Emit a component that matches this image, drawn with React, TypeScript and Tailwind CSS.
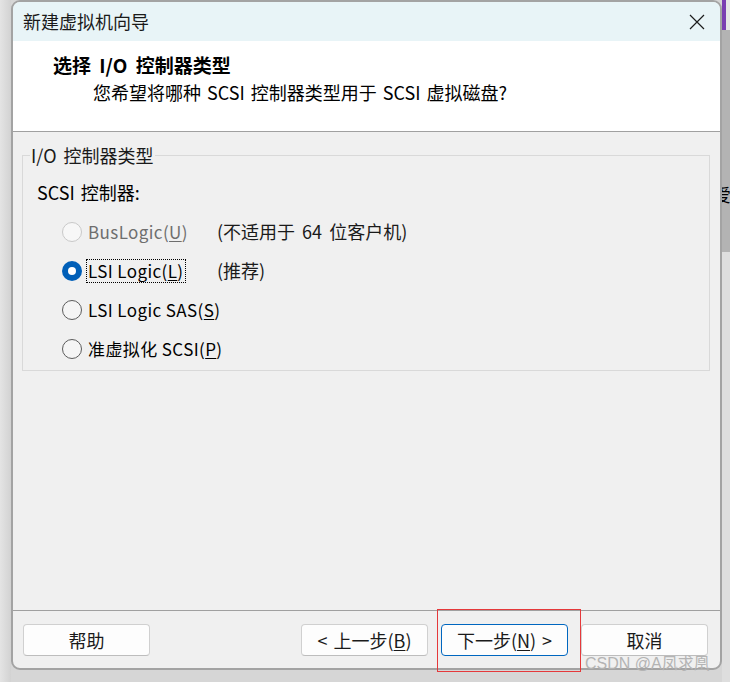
import React from "react";

const font = { fontFamily: '"Noto Sans CJK SC", "Noto Sans", sans-serif' };

const Radio = ({ state }: { state: "disabled" | "checked" | "normal" }) => {
  if (state === "checked") {
    return (
      <span className="w-[20px] h-[20px] rounded-full bg-[#005fb8] flex items-center justify-center shrink-0">
        <span className="w-[8px] h-[8px] rounded-full bg-white" />
      </span>
    );
  }
  if (state === "disabled") {
    return (
      <span className="w-[20px] h-[20px] rounded-full border border-[#c9c9c9] bg-[#f7f7f7] shrink-0" />
    );
  }
  return (
    <span className="w-[20px] h-[20px] rounded-full border border-[#5c5c5c] bg-[#f5f5f5] shrink-0" />
  );
};

const options = [
  { pre: "BusLogic(", key: "U", post: ")", note: "(不适用于 64 位客户机)", state: "disabled" as const },
  { pre: "LSI Logic(", key: "L", post: ")", note: "(推荐)", state: "checked" as const },
  { pre: "LSI Logic SAS(", key: "S", post: ")", note: "", state: "normal" as const },
  { pre: "准虚拟化 SCSI(", key: "P", post: ")", note: "", state: "normal" as const },
];

const Btn = ({ children, primary }: { children: React.ReactNode; primary?: boolean }) => (
  <button
    className={
      "w-[127px] h-[32px] rounded-[4px] bg-[#fdfdfd] text-[18px] text-[#1a1a1a] flex items-center justify-center [word-spacing:2px] " +
      (primary ? "border border-[#0067c0]" : "border border-[#d0d0d0] border-b-[#bdbdbd]")
    }
  >
    {children}
  </button>
);

export default function App() {
  return (
    <div className="relative w-[730px] h-[682px] overflow-hidden bg-[#d6d6d6] flex" style={font}>
      {/* left shadow strip */}
      <div className="w-[11px] h-full bg-gradient-to-r from-[#e4e4e4] to-[#d2d2d2]" />

      {/* dialog window */}
      <div className="w-[711px] h-[670px] border-2 border-[#a3a3a3] rounded-[9px] overflow-hidden flex flex-col bg-[#f0f0f0]">
        {/* title bar */}
        <div className="h-[39px] bg-[#e8f4f7] flex items-center justify-between pl-[10px] pr-[15px]">
          <span className="text-[18px] text-[#1a1a1a]">新建虚拟机向导</span>
          <svg width="16" height="16" viewBox="0 0 16 16" className="mt-[1px]">
            <path d="M1 1 L15 15 M15 1 L1 15" stroke="#1c1c1c" strokeWidth="1.2" fill="none" />
          </svg>
        </div>

        {/* header */}
        <div className="h-[90px] bg-white flex flex-col pl-[40px] pt-[11px]">
          <span className="text-[19px] font-bold text-black leading-[26px] [word-spacing:4px]">选择 I/O 控制器类型</span>
          <span className="text-[18px] text-black leading-[26px] pl-[40px] mt-[1px] [word-spacing:2px]">
            您希望将哪种 SCSI 控制器类型用于 SCSI 虚拟磁盘?
          </span>
        </div>
        <div className="h-px bg-[#a0a0a0]" />

        {/* body */}
        <div className="h-[478px] pt-[23px] pl-[9px] pr-[10px]">
          <div className="relative h-[216px] border border-[#d9d9d9]">
            <span className="absolute -top-[13px] left-[7px] px-[1px] bg-[#f0f0f0] text-[18px] text-[#1a1a1a] leading-[24px] [word-spacing:3px]">
              I/O 控制器类型
            </span>
            <div className="pt-[24px] pl-[14px] text-[18px] leading-[24px] text-black [word-spacing:2px]">SCSI 控制器:</div>
            <div className="mt-[8px] flex flex-col pl-[39px]">
              {options.map((o) => (
                <div key={o.key} className="h-[39px] flex items-center whitespace-nowrap">
                  <Radio state={o.state} />
                  <span
                    className={
                      "ml-[4px] w-[131px] shrink-0 flex text-[17px] tracking-[0.4px] " +
                      (o.state === "disabled" ? "text-[#6e6e6e]" : "text-black")
                    }
                  >
                    <span
                      className={
                        "px-[1px] leading-[22px] " +
                        (o.state === "checked" ? "border border-dotted border-black" : "border border-transparent")
                      }
                    >
                      {o.pre}
                      <span className="underline underline-offset-2">{o.key}</span>
                      {o.post}
                    </span>
                  </span>
                  <span className="text-[18px] text-[#1a1a1a] [word-spacing:3px]">{o.note}</span>
                </div>
              ))}
            </div>
          </div>
        </div>
        <div className="h-px bg-[#a0a0a0]" />

        {/* footer */}
        <div className="flex-1 flex pt-[13px] pl-[10px] pr-[12px]">
          <Btn>帮助</Btn>
          <div className="flex-1" />
          <div className="flex gap-[13px]">
            <Btn>
              &lt; 上一步(<span className="underline underline-offset-2">B</span>)
            </Btn>
            <Btn primary>
              下一步(<span className="underline underline-offset-2">N</span>) &gt;
            </Btn>
            <Btn>取消</Btn>
          </div>
        </div>
      </div>

      {/* background app strip on the right */}
      <div className="flex-1 h-full flex flex-col overflow-hidden">
        <div className="h-[30px] flex">
          <div className="w-[4px] bg-[#7a3eb1]" />
          <div className="flex-1 bg-[#e6e6e6]" />
        </div>
        <div className="h-[222px] bg-[#b3b3b3] overflow-hidden pt-[153px]">
          <span className="block text-[18px] leading-[22px] text-black -ml-[9px]">爱</span>
        </div>
        <div className="flex-1 bg-[#dedede]" />
      </div>

      {/* annotation overlay */}
      <div className="absolute left-[437px] top-[609px] w-[144px] h-[63px] border border-[#e5393b]" />
      <span
        className="absolute left-[585px] top-[654px] text-[16px] leading-[20px] text-[#b4b4b4]"
        style={{ fontFamily: '"Liberation Sans", "Noto Sans CJK SC", sans-serif' }}
      >
        CSDN @A凤求凰
      </span>
    </div>
  );
}
